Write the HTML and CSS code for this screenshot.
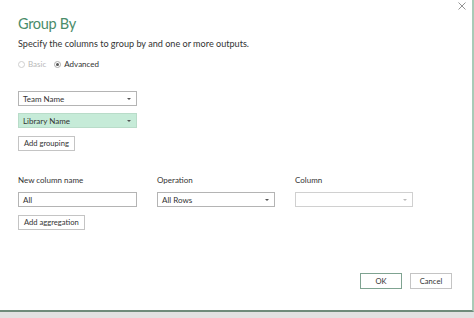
FILE: index.html
```html
<!DOCTYPE html>
<html>
<head>
<meta charset="utf-8">
<link rel="stylesheet" href="styles.css">
</head>
<body>
<div class="dialog">
  <div class="close">
    <svg width="8" height="8" viewBox="0 0 8 8"><path d="M0.5 0.5L7.5 7.5M7.5 0.5L0.5 7.5" stroke="#888" stroke-width="0.9" fill="none"/></svg>
  </div>
  <div class="content">
    <h1 class="title">Group By</h1>
    <p class="subtitle">Specify the columns to group by and one or more outputs.</p>
    <div class="radios">
      <label class="radio disabled"><span class="dot"></span>Basic</label>
      <label class="radio"><span class="dot checked"></span>Advanced</label>
    </div>
    <div class="groupings">
      <div class="select w119"><span>Team Name</span><span class="arrow"></span></div>
      <div class="select w119 selected"><span>Library Name</span><span class="arrow"></span></div>
      <div class="btn">Add grouping</div>
    </div>
    <div class="agg">
      <div class="field">
        <div class="label">New column name</div>
        <div class="select w119"><span>All</span></div>
      </div>
      <div class="field">
        <div class="label">Operation</div>
        <div class="select w118"><span>All Rows</span><span class="arrow"></span></div>
      </div>
      <div class="field">
        <div class="label">Column</div>
        <div class="select w118 disabledsel"><span></span><span class="arrow light"></span></div>
      </div>
    </div>
    <div class="btn aggbtn">Add aggregation</div>
    <div class="footer">
      <div class="btn fbtn ok">OK</div>
      <div class="btn fbtn">Cancel</div>
    </div>
  </div>
</div>
</body>
</html>
```
FILE: styles.css
```css
html, body {
  margin: 0;
  padding: 0;
  background: #e2e2e2;
}
body {
  width: 474px;
  height: 318px;
  overflow: hidden;
  font-family: "Lato", "Open Sans", sans-serif;
  color: #333;
}
.dialog {
  position: relative;
  box-sizing: border-box;
  width: 474px;
  height: 312px;
  background: #fff;
  border-right: 2px solid #a9cbb7;
  border-bottom: 2px solid #6f8c7b;
}
.close {
  position: absolute;
  right: 6px;
  top: 2px;
  width: 8px;
  height: 8px;
  line-height: 0;
}
.content {
  padding: 14px 0 0 18px;
}
.title {
  margin: 0;
  font-size: 14.5px;
  font-weight: 400;
  letter-spacing: -0.3px;
  line-height: 20px;
  color: #4a8c69;
}
.subtitle {
  margin: 3px 0 0;
  font-size: 9.1px;
  line-height: 13px;
  color: #333;
}
.radios {
  display: flex;
  gap: 8px;
  margin-top: 8px;
  font-size: 8px;
  line-height: 12px;
}
.radio {
  display: flex;
  align-items: center;
  gap: 3px;
  color: #333;
}
.radio.disabled {
  color: #b8b8b8;
}
.dot {
  box-sizing: border-box;
  width: 7px;
  height: 7px;
  border-radius: 50%;
  border: 1px solid #cfcfcf;
  background: #fff;
  position: relative;
}
.dot.checked {
  border-color: #aaa;
}
.dot.checked::after {
  content: "";
  position: absolute;
  left: 1px;
  top: 1px;
  width: 3px;
  height: 3px;
  border-radius: 50%;
  background: #555;
}
.groupings {
  margin-top: 21px;
  display: flex;
  flex-direction: column;
  gap: 7px;
  align-items: flex-start;
}
.select {
  box-sizing: border-box;
  height: 15px;
  border: 1px solid #b4b4b4;
  background: #fff;
  display: flex;
  align-items: center;
  justify-content: space-between;
  padding: 0 5px 0 4px;
  font-size: 8px;
  color: #333;
}
.w119 { width: 119px; }
.w118 { width: 118px; }
.select.selected {
  background: #c6ebd8;
  border-color: #b9dcc9;
}
.select.disabledsel {
  border-color: #d0d0d0;
}
.arrow {
  width: 0;
  height: 0;
  border-left: 2px solid transparent;
  border-right: 2px solid transparent;
  border-top: 2px solid #555;
}
.arrow.light {
  border-top-color: #bbb;
}
.btn {
  box-sizing: border-box;
  height: 15px;
  border: 1px solid #c4c4c4;
  background: #fff;
  font-size: 7.6px;
  line-height: 13px;
  padding: 0 5px;
  color: #333;
  display: inline-block;
}
.groupings .btn {
  margin-top: 1px;
}
.agg {
  margin-top: 23px;
  display: flex;
  gap: 20px;
}
.label {
  font-size: 8px;
  line-height: 12px;
  margin-bottom: 6px;
  color: #333;
}
.aggbtn {
  margin-top: 8px;
}
.footer {
  display: flex;
  justify-content: flex-end;
  gap: 8px;
  margin-top: 43px;
  padding-right: 20px;
}
.fbtn {
  width: 42px;
  height: 16px;
  line-height: 14px;
  text-align: center;
  padding: 0;
}
.fbtn.ok {
  border-color: #7fa391;
}
```
